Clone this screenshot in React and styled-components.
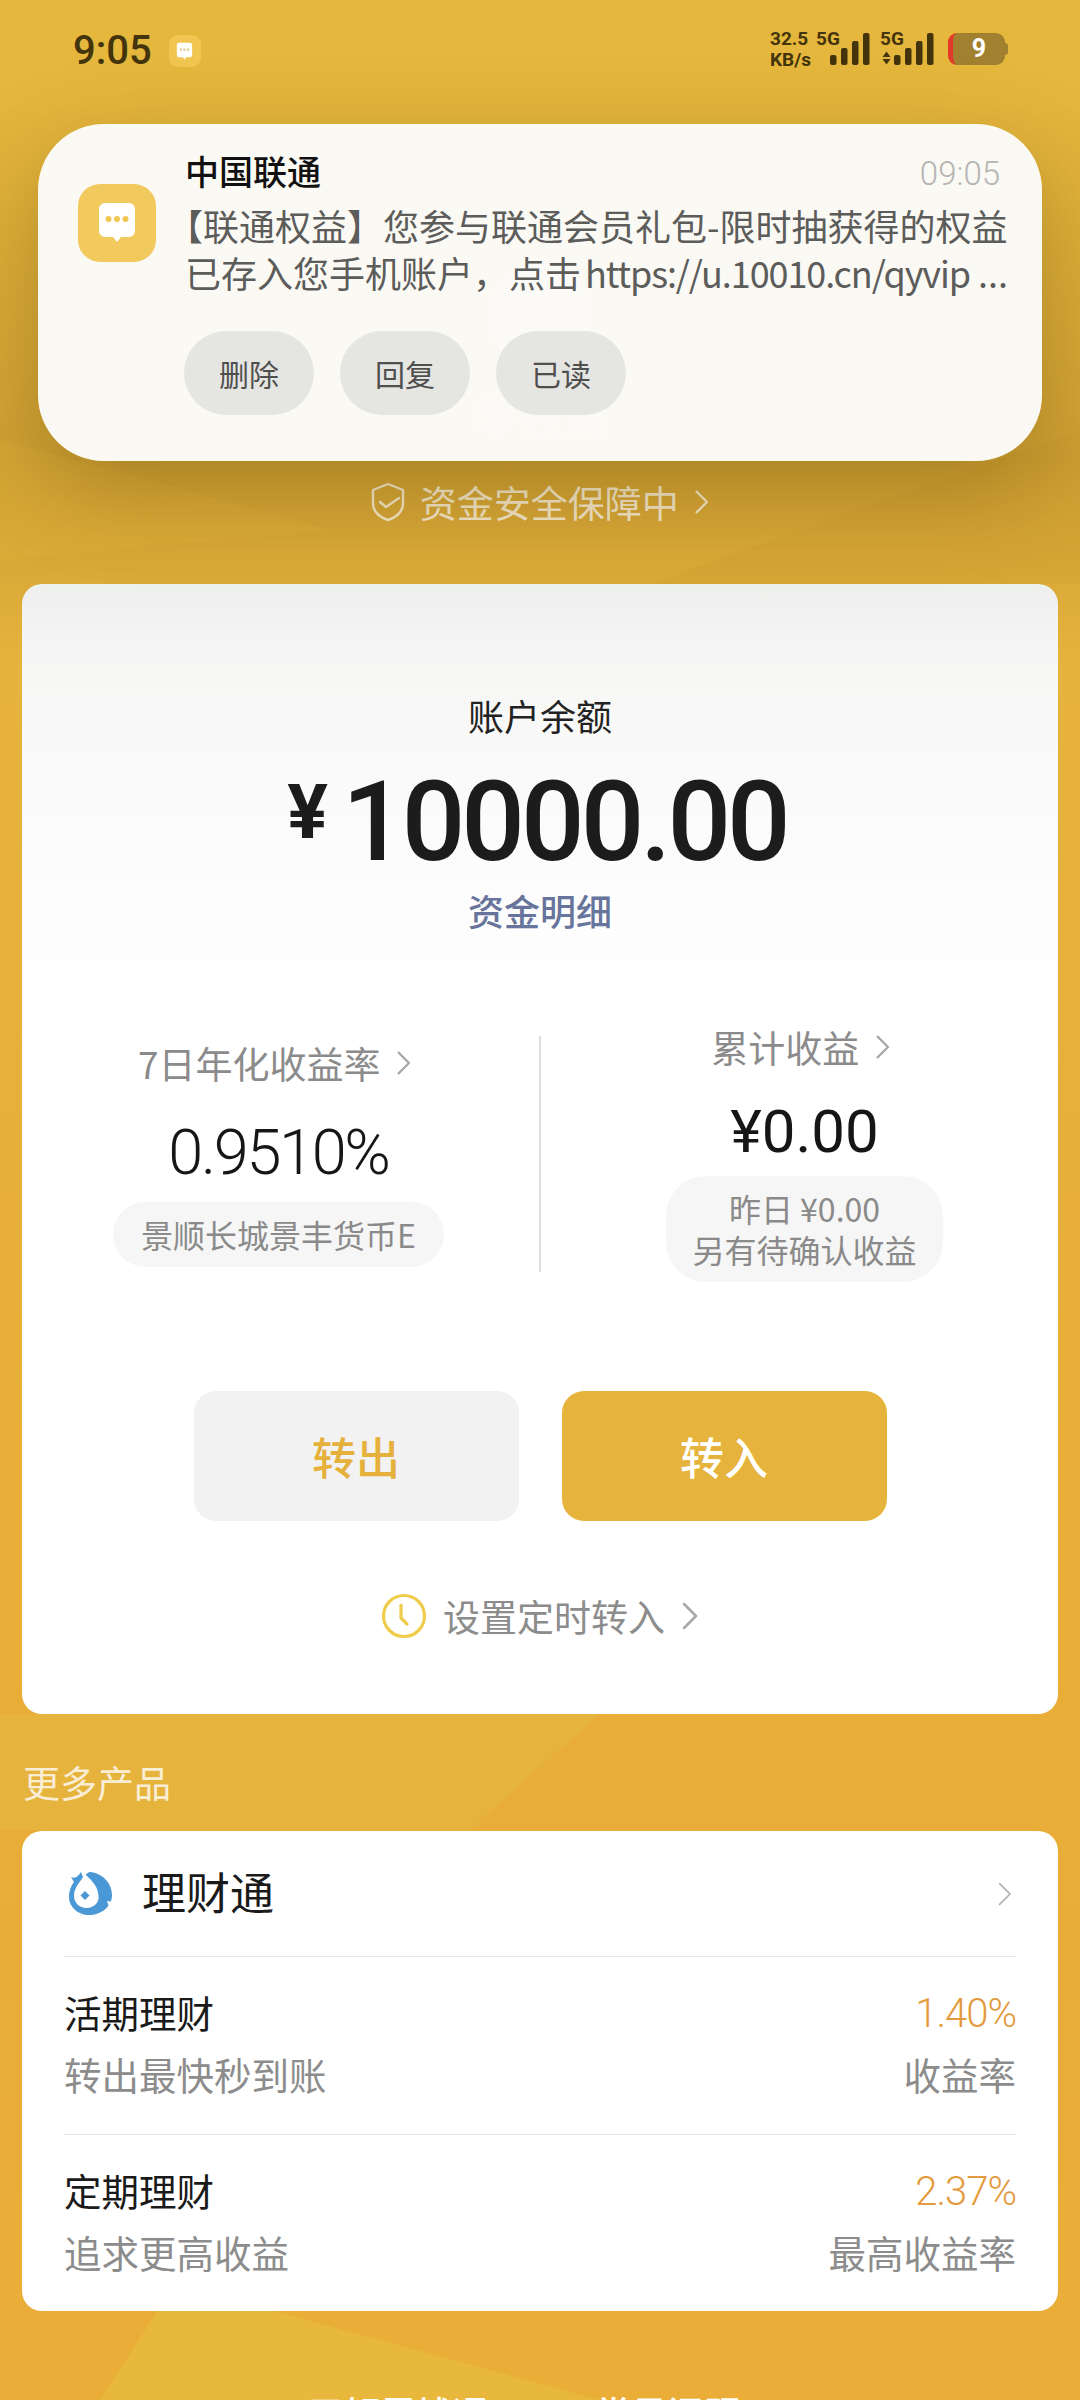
import React from 'react'
import styled, { createGlobalStyle } from 'styled-components'

const CJK = `"Noto Sans CJK SC", "Noto Sans", sans-serif`

const GlobalStyle = createGlobalStyle`
  html, body { margin: 0; padding: 0; }
  body { width: 1080px; height: 2400px; overflow: hidden; font-family: ${CJK}; }
  * { box-sizing: border-box; }
`

const Page = styled.div`
  position: relative;
  isolation: isolate;
  width: 1080px;
  height: 2400px;
  overflow: hidden;
  background:
    linear-gradient(180deg, rgba(70, 50, 0, 0) 100px, rgba(70, 50, 0, 0.14) 460px, rgba(70, 50, 0, 0.08) 570px, rgba(70, 50, 0, 0) 660px),
    linear-gradient(180deg, #e5b73c 0, #e6b33c 600px, #e8ae38 1500px, #e9ad38 2400px);
`

const Backdrop = styled.svg`
  position: absolute;
  left: 0;
  top: 0;
  z-index: -1;
`

const StatusBar = styled.div`
  height: 100px;
  padding: 33px 75px 0 73px;
  display: flex;
  justify-content: space-between;
  align-items: flex-start;
`

const StatusLeft = styled.div`
  display: flex;
  align-items: center;
  gap: 17px;
  height: 36px;
`

const Clock = styled.div`
  font-family: Roboto, sans-serif;
  font-size: 40px;
  font-weight: 500;
  line-height: 36px;
  color: #43340c;
`

const MiniApp = styled.div`
  width: 32px;
  height: 32px;
  border-radius: 9px;
  background: #f0c650;
  display: flex;
  align-items: center;
  justify-content: center;
`

const StatusRight = styled.div`
  display: flex;
  align-items: center;
  height: 32px;
  color: #43340c;
  font-family: Roboto, sans-serif;
  font-weight: 700;
`

const Speed = styled.div`
  font-size: 19px;
  line-height: 21px;
  width: 46px;
  white-space: nowrap;
`

const SignalGroup = styled.div`
  position: relative;
  width: 54px;
  height: 32px;
  margin-right: ${p => p.$gap}px;
  display: flex;
  justify-content: flex-end;
`

const NetLabel = styled.span`
  position: absolute;
  left: 0;
  top: -3px;
  font-size: 19px;
  line-height: 18px;
`

const Arrows = styled.svg`
  position: absolute;
  left: 2px;
  bottom: 0;
`

const Battery = styled.div`
  position: relative;
  width: 57px;
  height: 32px;
  border-radius: 9px;
  border-left: 5px solid #e13a2a;
  background: #a1812f;
  color: #fff;
  font-size: 25px;
  line-height: 32px;
  text-align: center;
  &::after {
    content: '';
    position: absolute;
    right: -3px;
    top: 10px;
    width: 3px;
    height: 12px;
    border-radius: 0 3px 3px 0;
    background: #a1812f;
  }
`

const Hero = styled.div`
  height: 344px;
  display: flex;
  flex-direction: column;
  align-items: center;
  justify-content: flex-end;
`

const HeroLogo = styled.div`
  width: 104px;
  height: 104px;
  border-radius: 50%;
  background: #fff;
  margin-bottom: 20px;
`

const HeroName = styled.div`
  font-size: 44px;
  line-height: 56px;
  color: #fff;
`

const SafeLine = styled.div`
  margin-top: 33px;
  height: 50px;
  display: flex;
  align-items: center;
  justify-content: center;
  gap: 15px;
  font-size: 37px;
  color: rgba(255, 255, 255, 0.72);
`

const Notice = styled.div`
  position: absolute;
  left: 38px;
  top: 124px;
  width: 1004px;
  height: 337px;
  border-radius: 66px;
  background: rgba(251, 250, 247, 0.985);
  box-shadow: 0 30px 90px rgba(80, 55, 0, 0.3);
  display: flex;
  padding: 25px 32px 0 40px;
`

const NoticeIcon = styled.div`
  flex: none;
  width: 78px;
  height: 78px;
  margin-top: 35px;
  margin-right: 29px;
  border-radius: 22px;
  background: #f2c95c;
  display: flex;
  align-items: center;
  justify-content: center;
`

const NoticeBody = styled.div`
  flex: 1;
  min-width: 0;
`

const NoticeHead = styled.div`
  display: flex;
  justify-content: space-between;
  align-items: flex-end;
  height: 44px;
`

const NoticeTitle = styled.div`
  font-size: 34px;
  font-weight: 500;
  line-height: 44px;
  color: #111;
`

const NoticeTime = styled.div`
  font-family: Roboto, sans-serif;
  font-weight: 300;
  font-size: 33px;
  line-height: 38px;
  color: #b4b4b2;
  margin-right: 10px;
`

const NoticeText = styled.div`
  margin-top: 9px;
  font-size: 36px;
  line-height: 47px;
  color: #5c5c5b;
  white-space: nowrap;
`

const OpenBracket = styled.span`
  margin-left: -18px;
`

const Url = styled.span`
  margin-left: -4px;
  letter-spacing: -1.1px;
`

const NoticeActions = styled.div`
  display: flex;
  gap: 26px;
  margin-top: 35px;
  margin-left: -1px;
`

const NoticeButton = styled.div`
  width: 130px;
  height: 84px;
  border-radius: 42px;
  background: #e5e5e2;
  color: #4f4f4e;
  font-size: 30px;
  display: flex;
  align-items: center;
  justify-content: center;
`

const Card = styled.div`
  margin: 0 22px;
  background: #fff;
  border-radius: 20px;
`

const BalanceCard = styled(Card)`
  margin-top: 57px;
  height: 1130px;
  padding-top: 108px;
  background: linear-gradient(180deg, #eef0ee 0, #f7f7f6 90px, #fbfbfb 240px, #fff 420px);
  display: flex;
  flex-direction: column;
  align-items: center;
`

const BalanceLabel = styled.div`
  font-size: 36px;
  line-height: 46px;
  color: #222;
`

const BalanceAmount = styled.div`
  margin-top: 26px;
  padding-right: 6px;
  display: flex;
  align-items: flex-start;
  color: #1c1c1c;
  font-family: Roboto, sans-serif;
  font-weight: 500;
  height: 116px;
`

const Yen = styled.span`
  font-size: 76px;
  line-height: 96px;
  margin-right: 14px;
  font-weight: 700;
`

const BalanceNumber = styled.span`
  font-size: 112px;
  line-height: 116px;
  letter-spacing: -4px;
`

const DetailLink = styled.div`
  margin-top: 5px;
  font-size: 36px;
  font-weight: 500;
  line-height: 50px;
  color: #67749b;
`

const Stats = styled.div`
  margin-top: 87px;
  width: 100%;
  height: 250px;
  display: grid;
  grid-template-columns: 1fr 2px 1fr;
`

const StatDivider = styled.div`
  background: #dddddb;
  height: 236px;
  margin-top: 14px;
`

const StatCol = styled.div`
  display: flex;
  flex-direction: column;
  align-items: center;
  padding-top: ${p => p.$top}px;
  padding-left: ${p => p.$left || 0}px;
  padding-right: ${p => p.$right || 0}px;
`

const StatLabel = styled.div`
  display: flex;
  align-items: center;
  gap: 16px;
  margin-right: 7px;
  font-size: 37px;
  line-height: 50px;
  color: #8b8b8b;
`

const StatValue = styled.div`
  font-family: Roboto, sans-serif;
  font-size: ${p => p.$size}px;
  font-weight: ${p => p.$weight};
  letter-spacing: ${p => p.$track || 0}px;
  line-height: 70px;
  color: #161616;
  margin-top: ${p => p.$mt}px;
`

const StatTag = styled.div`
  margin-top: ${p => p.$mt}px;
  background: #f6f6f6;
  border-radius: ${p => p.$r}px;
  padding: ${p => p.$pad};
  font-size: 32px;
  line-height: 41px;
  color: #8a8a8a;
  text-align: center;
  white-space: nowrap;
`

const Buttons = styled.div`
  margin-top: 119px;
  display: flex;
  gap: 43px;
`

const ActionButton = styled.div`
  width: 325px;
  height: 130px;
  border-radius: 22px;
  background: ${p => (p.$primary ? '#e6b33c' : '#f2f2f2')};
  color: ${p => (p.$primary ? '#fff' : '#e6b03c')};
  font-size: 44px;
  font-weight: 500;
  display: flex;
  align-items: center;
  justify-content: center;
`

const TimerLink = styled.div`
  margin-top: 70px;
  display: flex;
  align-items: center;
  font-size: 37px;
  line-height: 50px;
  color: #8c8c8c;
  gap: 16px;
`

const SectionTitle = styled.div`
  margin: 48px 0 0 23px;
  height: 40px;
  font-size: 37px;
  line-height: 40px;
  color: rgba(255, 255, 255, 0.8);
`

const ProductCard = styled(Card)`
  margin-top: 29px;
  height: 480px;
  padding: 0 42px;
`

const ProductHead = styled.div`
  height: 126px;
  padding: 0 3px 0 4px;
  display: flex;
  align-items: center;
  border-bottom: 1px solid #e8e8e8;
`

const ProductName = styled.div`
  flex: 1;
  margin: 0 0 6px 28px;
  font-size: 44px;
  color: #1a1a1a;
`

const ProductRow = styled.div`
  height: ${p => p.$h}px;
  padding-top: 30px;
  display: grid;
  grid-template-columns: 1fr auto;
  grid-row-gap: 12px;
  align-content: start;
  ${p => p.$line && 'border-bottom: 1px solid #e8e8e8;'}
`

const RowName = styled.div`
  font-size: 37.5px;
  line-height: 50px;
  color: #1a1a1a;
`

const RowRate = styled.div`
  padding-top: 3px;
  font-family: Roboto, sans-serif;
  font-weight: 300;
  font-size: 40px;
  letter-spacing: -1px;
  line-height: 47px;
  color: #e39a3c;
  text-align: right;
`

const RowNote = styled.div`
  font-size: 37.5px;
  line-height: 50px;
  color: #8c8c8c;
  text-align: ${p => (p.$right ? 'right' : 'left')};
`

const Footer = styled.div`
  margin-top: 76px;
  padding-right: 32px;
  display: flex;
  justify-content: center;
  gap: 107px;
  font-size: 36px;
  font-weight: 500;
  line-height: 50px;
  color: #fff;
`

const Chevron = ({ size = 30, color = '#a8a8a8', width = 2.6 }) => (
  <svg width={size * 0.6} height={size} viewBox="0 0 18 30" fill="none">
    <path d="M3 3l12 12L3 27" stroke={color} strokeWidth={width} strokeLinecap="round" strokeLinejoin="round" />
  </svg>
)

const Bars = () => (
  <svg width="40" height="32" viewBox="0 0 40 32" fill="#43340c">
    <rect x="0" y="22" width="6.5" height="10" rx="2" />
    <rect x="11" y="15" width="6.5" height="17" rx="2" />
    <rect x="22" y="8" width="6.5" height="24" rx="2" />
    <rect x="33" y="0" width="6.5" height="32" rx="2" />
  </svg>
)

const MessageGlyph = ({ size = 40, dot = '#f0c650' }) => (
  <svg width={size} height={size * 1.1} viewBox="0 0 40 44">
    <path d="M8 2h24a6 6 0 0 1 6 6v22a6 6 0 0 1-6 6h-8l-4 5-4-5H8a6 6 0 0 1-6-6V8a6 6 0 0 1 6-6z" fill="#fff" />
    <circle cx="11.5" cy="18" r="3" fill={dot} />
    <circle cx="20" cy="18" r="3" fill={dot} />
    <circle cx="28.5" cy="18" r="3" fill={dot} />
  </svg>
)

const Shield = () => (
  <svg width="34" height="40" viewBox="0 0 34 40" fill="none" stroke="rgba(255,255,255,0.72)" strokeWidth="2.4" strokeLinejoin="round" strokeLinecap="round">
    <path d="M17 2l15 6v13c0 8-6 14-15 17C8 35 2 29 2 21V8z" />
    <path d="M9 20l6 5 13-9" />
  </svg>
)

const ClockIcon = () => (
  <svg width="46" height="46" viewBox="0 0 46 46" fill="none" stroke="#f0cc4c" strokeWidth="3.2" strokeLinecap="round" strokeLinejoin="round">
    <circle cx="23" cy="23" r="20.5" />
    <path d="M20 12v13l6 6" />
  </svg>
)

const FishLogo = () => (
  <svg width="46" height="46" viewBox="0 0 46 46">
    <path d="M3 6C6 8 10 6 13 1l2 5C18 3 20 1 23 1c12 2 21 11 21 23 0 12-11 20-23 20C10 44 1 36 1 26c0-8 4-14 5-15z" fill="#4a98d6" />
    <path d="M17 3C13 10 6 16 6 25c0 7 6 12 12 12 5 0 8-2 10-4 3-3 3-7 2-11C29 14 22 8 17 3z" fill="#fff" />
    <path d="M17 20l4.5 4.5L17 29l-4.5-4.5z" fill="#4a98d6" />
    <path d="M45 31l-6-1 2 6z" fill="#fff" />
  </svg>
)

const App = () => {
  return (
    <Page>
      <GlobalStyle />
      <Backdrop width="1080" height="2400" viewBox="0 0 1080 2400">
        <polygon points="0,1714 600,1714 469,1830 0,1830" fill="#e6b33c" />
        <polygon points="158,2310 270,2310 600,2400 100,2400" fill="#e7b83c" />
        <polygon points="650,584 1080,430 1080,584" fill="#b07f20" opacity="0.08" />
        <polygon points="0,440 330,530 0,560" fill="#f0c040" opacity="0.14" />
      </Backdrop>
      <StatusBar>
        <StatusLeft>
          <Clock>9:05</Clock>
          <MiniApp><MessageGlyph size={17} dot="#e6cf90" /></MiniApp>
        </StatusLeft>
        <StatusRight>
          <Speed>32.5<br />KB/s</Speed>
          <SignalGroup $gap={10}>
            <NetLabel>5G</NetLabel>
            <Bars />
          </SignalGroup>
          <SignalGroup $gap={14}>
            <NetLabel>5G</NetLabel>
            <Arrows width="9" height="14" viewBox="0 0 9 14" fill="#43340c">
              <path d="M0.5 6l4-5.5 4 5.5zM0.5 8l4 5.5 4-5.5z" />
            </Arrows>
            <Bars />
          </SignalGroup>
          <Battery>9</Battery>
        </StatusRight>
      </StatusBar>

      <Hero>
        <HeroLogo />
        <HeroName>零钱通</HeroName>
      </Hero>
      <SafeLine>
        <Shield />
        资金安全保障中
        <Chevron size={26} color="rgba(255,255,255,0.72)" />
      </SafeLine>

      <BalanceCard>
        <BalanceLabel>账户余额</BalanceLabel>
        <BalanceAmount>
          <Yen>¥</Yen>
          <BalanceNumber>10000.00</BalanceNumber>
        </BalanceAmount>
        <DetailLink>资金明细</DetailLink>
        <Stats>
          <StatCol $top={16} $right={4}>
            <StatLabel>7日年化收益率<Chevron size={26} /></StatLabel>
            <StatValue $size={63} $weight={300} $mt={30} $track={-2.3}>0.9510%</StatValue>
            <StatTag $mt={14} $r={34} $pad="12px 28px">景顺长城景丰货币E</StatTag>
          </StatCol>
          <StatDivider />
          <StatCol $top={0} $left={10}>
            <StatLabel>累计收益<Chevron size={26} /></StatLabel>
            <StatValue $size={60} $weight={400} $mt={25}>¥0.00</StatValue>
            <StatTag $mt={9} $r={40} $pad="12px 26px">昨日 ¥0.00<br />另有待确认收益</StatTag>
          </StatCol>
        </Stats>
        <Buttons>
          <ActionButton>转出</ActionButton>
          <ActionButton $primary>转入</ActionButton>
        </Buttons>
        <TimerLink>
          <ClockIcon />
          设置定时转入
          <Chevron size={30} />
        </TimerLink>
      </BalanceCard>

      <SectionTitle>更多产品</SectionTitle>
      <ProductCard>
        <ProductHead>
          <FishLogo />
          <ProductName>理财通</ProductName>
          <Chevron size={26} color="#b0b0b0" width={2} />
        </ProductHead>
        <ProductRow $h={178} $line>
          <RowName>活期理财</RowName>
          <RowRate>1.40%</RowRate>
          <RowNote>转出最快秒到账</RowNote>
          <RowNote $right>收益率</RowNote>
        </ProductRow>
        <ProductRow $h={176}>
          <RowName>定期理财</RowName>
          <RowRate>2.37%</RowRate>
          <RowNote>追求更高收益</RowNote>
          <RowNote $right>最高收益率</RowNote>
        </ProductRow>
      </ProductCard>
      <Footer>
        <span>了解零钱通</span>
        <span>常见问题</span>
      </Footer>

      <Notice>
        <NoticeIcon><MessageGlyph /></NoticeIcon>
        <NoticeBody>
          <NoticeHead>
            <NoticeTitle>中国联通</NoticeTitle>
            <NoticeTime>09:05</NoticeTime>
          </NoticeHead>
          <NoticeText>
            <OpenBracket>【</OpenBracket>联通权益】您参与联通会员礼包-限时抽获得的权益<br />
            已存入您手机账户，点击 <Url>https://u.10010.cn/qyvip</Url> ...
          </NoticeText>
          <NoticeActions>
            <NoticeButton>删除</NoticeButton>
            <NoticeButton>回复</NoticeButton>
            <NoticeButton>已读</NoticeButton>
          </NoticeActions>
        </NoticeBody>
      </Notice>
    </Page>
  )
}

export default App
